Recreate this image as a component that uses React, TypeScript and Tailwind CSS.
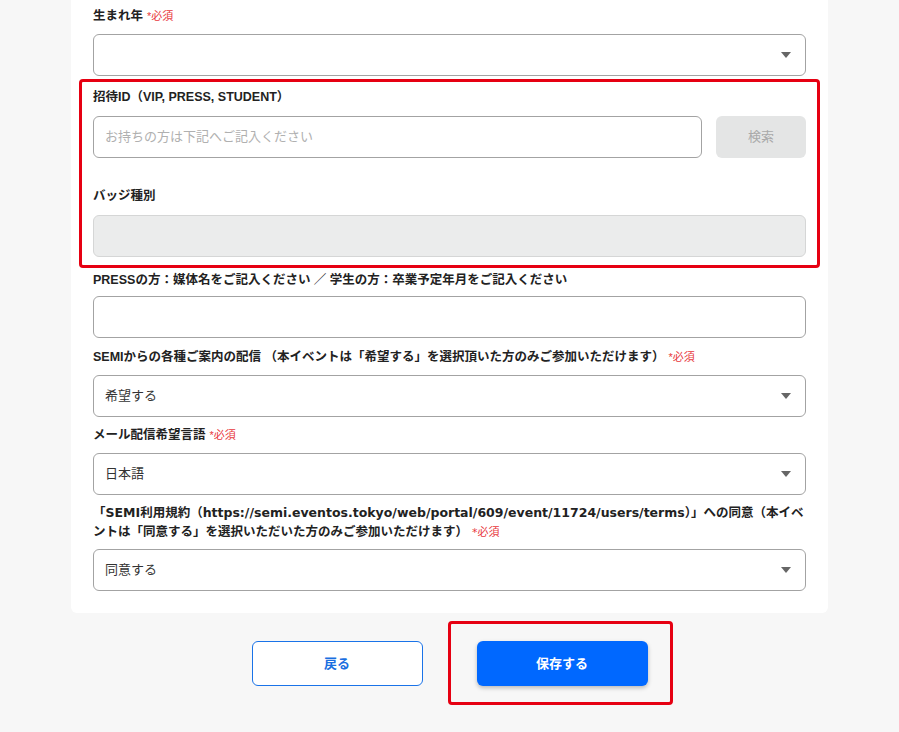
import React from 'react'

const font = { fontFamily: '"Liberation Sans", "Noto Sans CJK JP", "Noto Sans", sans-serif' }

function Required() {
  return <span className="ml-[4px] text-[11px] font-normal text-[#e8383d]">*必須</span>
}

function Label({ children, required }: { children: React.ReactNode; required?: boolean }) {
  return (
    <div className="text-[12.5px] font-bold leading-[19px] text-[#222]">
      {children}
      {required && <Required />}
    </div>
  )
}

function SelectBox({ value }: { value?: string }) {
  return (
    <div className="mt-[8px] flex h-[42px] items-center justify-between rounded-[6px] border border-[#a3a3a3] bg-white pl-[11px] pr-[14px]">
      <span className="text-[13px] text-[#333]">{value}</span>
      <svg width="10" height="6" viewBox="0 0 10 6">
        <path d="M0 0h10L5 6z" fill="#666" />
      </svg>
    </div>
  )
}

function TextBox({ placeholder }: { placeholder?: string }) {
  return (
    <div className="flex h-[42px] flex-1 items-center rounded-[6px] border border-[#a3a3a3] bg-white px-[11px]">
      <span className="text-[13px] text-[#b0b0b0]">{placeholder}</span>
    </div>
  )
}

export default function App() {
  return (
    <div className="min-h-[732px] w-full bg-[#f7f7f7]" style={font}>
      <div className="mx-auto w-[757px] rounded-b-[6px] bg-white px-[22px] pt-[7px] pb-[22px]">
        <Label required>生まれ年</Label>
        <SelectBox />

        {/* 招待ID・バッジ種別 (赤枠で囲まれた部分) */}
        <div className="-mx-[14px] mt-[3px] rounded-[4px] border-[3px] border-[#e60012] px-[11px] pt-[6px] pb-[8px]">
          <Label>招待ID（VIP, PRESS, STUDENT）</Label>
          <div className="mt-[9px] flex gap-[14px]">
            <TextBox placeholder="お持ちの方は下記へご記入ください" />
            <div className="flex h-[42px] w-[90px] items-center justify-center rounded-[6px] bg-[#e4e5e5] text-[13px] text-[#a9a9a9]">
              検索
            </div>
          </div>
          <div className="mt-[29px]">
            <Label>バッジ種別</Label>
          </div>
          <div className="mt-[9px] h-[42px] rounded-[6px] border border-[#d5d6d6] bg-[#ebecec]" />
        </div>

        <div className="mt-[3px]">
          <Label>PRESSの方：媒体名をご記入ください ／ 学生の方：卒業予定年月をご記入ください</Label>
        </div>
        <div className="mt-[6px] flex">
          <TextBox />
        </div>

        <div className="mt-[10px]">
          <Label required>SEMIからの各種ご案内の配信 （本イベントは「希望する」を選択頂いた方のみご参加いただけます）</Label>
        </div>
        <SelectBox value="希望する" />

        <div className="mt-[9px]">
          <Label required>メール配信希望言語</Label>
        </div>
        <SelectBox value="日本語" />

        <div className="mt-[8px]" style={{ fontFamily: '"DejaVu Sans", "Noto Sans CJK JP", sans-serif' }}>
          <Label required>
            「SEMI利用規約（https://semi.eventos.tokyo/web/portal/609/event/11724/users/terms）」への同意（本イベントは「同意する」を選択いただいた方のみご参加いただけます）
          </Label>
        </div>
        <div className="-mt-[1px]">
          <SelectBox value="同意する" />
        </div>
      </div>

      <div className="mt-[28px] flex justify-center gap-[54px]">
        <button className="h-[45px] w-[171px] rounded-[6px] border border-[#1a73e8] bg-white text-[13px] font-bold text-[#1a6fe0]">
          戻る
        </button>
        <div className="relative">
          <button className="h-[45px] w-[171px] rounded-[6px] bg-[#0068ff] text-[13px] font-bold text-white shadow-[0_2px_4px_rgba(0,0,0,0.25)]">
            保存する
          </button>
          <div className="pointer-events-none absolute -top-[20px] -bottom-[19px] -left-[29px] -right-[25px] rounded-[4px] border-[3px] border-[#e60012]" />
        </div>
      </div>
    </div>
  )
}
